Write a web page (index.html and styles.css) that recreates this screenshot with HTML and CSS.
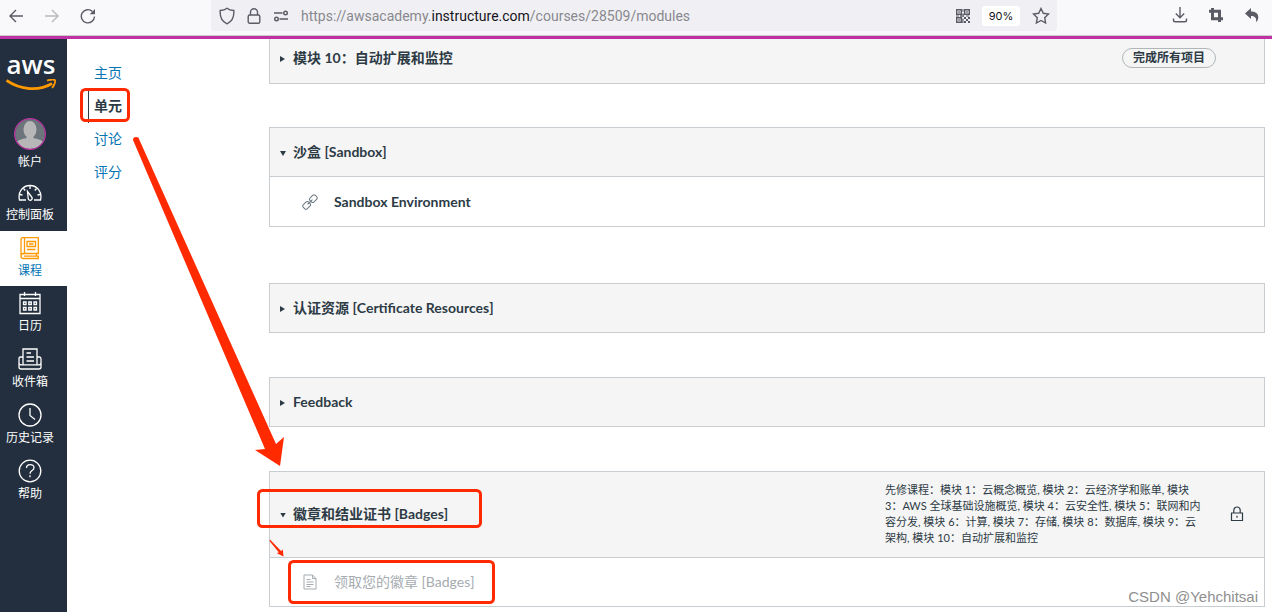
FILE: index.html
```html
<!DOCTYPE html>
<html lang="zh-CN">
<head>
<meta charset="utf-8">
<title>单元</title>
<link rel="stylesheet" href="styles.css">
</head>
<body>
<header class="toolbar">
  <div class="nav-buttons">
    <button class="tool" aria-label="后退"><svg width="16" height="16" viewBox="0 0 16 16"><path d="M15 8H2M8 2L2 8l6 6"/></svg></button>
    <button class="tool faded" aria-label="前进"><svg width="16" height="16" viewBox="0 0 16 16"><path d="M1 8h13M8 2l6 6-6 6"/></svg></button>
    <button class="tool" aria-label="刷新"><svg width="16" height="16" viewBox="0 0 16 16"><path d="M14.500 8.500A6.600 6.600 0 1 1 12.500 3.500"/><path class="solid" d="M15 1v5.300H9.700z"/></svg></button>
  </div>
  <div class="address">
    <svg width="16" height="18" viewBox="0 0 16 18"><path d="M8 1.200C10 2.800 12.500 3.300 14.800 3.500C15.200 9 13 14.500 8 16.800C3 14.500 .8 9 1.200 3.500C3.500 3.300 6 2.800 8 1.200z"/></svg>
    <svg width="14" height="16" viewBox="0 0 14 16"><rect x="1.200" y="7" width="11.600" height="8.200" rx="1.500"/><path d="M3.500 7V4a3.500 3.300 0 0 1 7 0v3"/></svg>
    <svg width="16" height="12" viewBox="0 0 16 12"><path d="M1 3h8.500M6.500 9H15"/><circle cx="12.500" cy="3" r="1.800"/><circle cx="3.500" cy="9" r="1.800"/></svg>
    <span class="url">https://awsacademy.<b>instructure.com</b>/courses/28509/modules</span>
    <svg class="qr" width="14" height="14" viewBox="0 0 14 14"><path d="M.7.700h4.600v4.600H.7zM8.700.700h4.600v4.600H8.700zM.7 8.700h4.600v4.600H.7z"/><path class="solid" d="M2.300 2.300h1.500v1.500H2.300zM10.300 2.300h1.500v1.500h-1.500zM2.300 10.300h1.500v1.500H2.300zM6.500 0h1v3h-1zM6.300 4.500h1.500V8H6.300zM0 6.500h3v1H0zM4 6.300h2v1.500H4zM8 8h2v2H8zM12 8h2v2h-2zM10 10h2v2h-2zM8 12h2v2H8zM12 12h2v2h-2zM6.300 9.500h1.200V14H6.300zM10 6.500h3v1h-3z"/></svg>
    <button class="zoom">90%</button>
    <svg width="18" height="18" viewBox="0 0 18 18"><path d="M9 1.500l2.300 4.800 5.200.700-3.800 3.700.9 5.300L9 13.500 4.400 16l.9-5.300L1.500 7l5.200-.7z"/></svg>
  </div>
  <div class="actions">
    <button class="tool" aria-label="下载"><svg width="16" height="16" viewBox="0 0 16 16"><path d="M8 0v10.500M3.800 6.500L8 10.700l4.200-4.200M1.500 11.500v1.500q0 1.800 1.800 1.800h9.400q1.800 0 1.800-1.800v-1.500"/></svg></button>
    <button class="tool" aria-label="截图"><svg width="16" height="16" viewBox="0 0 16 16"><path class="thick" d="M1 4.300h10.500v7.500M15 11.700H4.500V1M11.500 11v4"/></svg></button>
    <button class="tool" aria-label="撤销"><svg width="16" height="16" viewBox="0 0 16 16"><path class="solid" d="M1 6.500L7 1v3.500c5 0 7.500 2.500 7.300 6-.1 2-1 3.500-2.300 4.500.6-3.500-.5-6-5-6V12z"/></svg></button>
  </div>
</header>
<div class="app">
  <nav class="sidebar" aria-label="全局导航">
    <a class="logo" href="#"><span>aws</span><svg width="52" height="14" viewBox="0 0 52 14"><path class="smile" d="M.5 1.500C14 11 33 12.500 46 4.500"/><path class="smile-tip" d="M41 1.600C44 .7 48 .3 49 1.200 49.500 2.500 48.500 6.500 46 8.800"/></svg></a>
    <a class="item account" href="#"><svg width="32" height="32" viewBox="0 0 32 32"><defs><clipPath id="face"><circle cx="16" cy="16" r="15"/></clipPath></defs><circle cx="16" cy="16" r="15" fill="#6c757c" stroke="none"/><g clip-path="url(#face)" fill="#b7b7b7" stroke="none"><ellipse cx="16" cy="11.500" rx="6.500" ry="8.500"/><path d="M12.500 17h7v3c4 1 9 2 10 5v7h-27v-7c1-3 6-4 10-5z"/></g><circle cx="16" cy="16" r="15.400" fill="none" stroke="#bf32a4" stroke-width="1.200"/></svg><span>帐户</span></a>
    <a class="item" href="#"><svg width="24" height="24" viewBox="0 0 24 24"><path d="M8 20H1.500C-.5 11.500 5 5.500 12 5.500S24.500 11.500 22.500 20H16"/><path d="M12 6v3M5.500 8.500l1.700 2M18.500 8.500l-1.700 2M2 14.500l2.500.5M22 14.500l-2.500.5M9.500 11.500l4.200 5.500a2 2 0 1 1-3.500 1.500z"/></svg><span>控制面板</span></a>
    <a class="item active" href="#"><svg width="24" height="24" viewBox="0 0 24 24"><path d="M5 1.700h15.300v15.800H5.500a2.500 2.500 0 0 0 0 5h14.800v-2.300H6M3 20V4q0-2.300 2-2.300M6.500 2v15M18.500 17.500v2.500M9 5.500h8.500v5H9zM11 8h4.500M9 13.500h8.500"/></svg><span>课程</span></a>
    <a class="item" href="#"><svg width="24" height="24" viewBox="0 0 24 24"><path d="M2 3.500h20v19H2zM2 7.500h20M6.500 1v4M17.500 1v4M9 3.500h6"/><path d="M5.500 11h2.500v2.500H5.500zM10.800 11h2.500v2.500h-2.500zM16 11h2.500v2.500H16zM5.500 16.500h2.500V19H5.500zM10.800 16.500h2.500V19h-2.500zM16 16.500h2.500V19H16z"/></svg><span>日历</span></a>
    <a class="item" href="#"><svg width="24" height="24" viewBox="0 0 24 24"><path d="M5 17.500V2h14v15.500M5 10H2.500Q1 10 1 12v8q0 2 2 2h18q2 0 2-2v-8q0-2-1.500-2H19M1 16q0 1.800 2 1.800h18q2 0 2-1.800M8.500 6h4.500M8.500 10h7.500M8.500 14h7.500"/></svg><span>收件箱</span></a>
    <a class="item" href="#"><svg width="24" height="24" viewBox="0 0 24 24"><circle cx="12" cy="12" r="11"/><path d="M12 5v7.500l5 4"/></svg><span>历史记录</span></a>
    <a class="item" href="#"><svg width="24" height="24" viewBox="0 0 24 24"><circle cx="12" cy="12" r="10.800"/><path d="M8.500 9c0-4.500 7.500-4.500 7.500-.3 0 3-4 2.700-4 6M12 16.300v2"/></svg><span>帮助</span></a>
  </nav>
  <nav class="course-nav" aria-label="课程导航">
    <a href="#">主页</a>
    <a class="current" href="#">单元</a>
    <a href="#">讨论</a>
    <a href="#">评分</a>
  </nav>
  <main class="modules">
    <section class="module first">
      <div class="module-head"><button class="toggle" aria-expanded="false">模块 10：自动扩展和监控</button><span class="pill">完成所有项目</span></div>
    </section>
    <section class="module open">
      <div class="module-head"><button class="toggle" aria-expanded="true">沙盒 [Sandbox]</button></div>
      <div class="row"><svg width="16" height="16" viewBox="0 0 16 16"><g transform="rotate(-45 8 8)"><rect x="-.5" y="5.200" width="7.500" height="5.600" rx="2"/><rect x="9" y="5.200" width="7.500" height="5.600" rx="2"/><path d="M4.500 8h7"/></g></svg><a class="row-title" href="#">Sandbox Environment</a></div>
    </section>
    <section class="module">
      <div class="module-head"><button class="toggle" aria-expanded="false">认证资源 [Certificate Resources]</button></div>
    </section>
    <section class="module">
      <div class="module-head"><button class="toggle" aria-expanded="false">Feedback</button></div>
    </section>
    <section class="module badges">
      <div class="module-head"><button class="toggle" aria-expanded="true">徽章和结业证书 [Badges]</button>
        <p class="prereq">先修课程：模块 1：云概念概览, 模块 2：云经济学和账单, 模块 3：AWS 全球基础设施概览, 模块 4：云安全性, 模块 5：联网和内容分发, 模块 6：计算, 模块 7：存储, 模块 8：数据库, 模块 9：云架构, 模块 10：自动扩展和监控</p>
        <svg class="lock" width="14" height="16" viewBox="0 0 14 16"><path d="M1.500 7h11v7.500h-11zM3.800 7V4.500a3.200 3.500 0 0 1 6.400 0V7M7 9.800v2"/></svg></div>
      <div class="row locked"><svg width="16" height="16" viewBox="0 0 16 16"><path d="M2 1h8.500L14 4.500V15H2zM10.500 1v3.500H14M4.500 5.500h4M4.500 8h7M4.500 10.500h7M4.500 12.500h4"/></svg><span class="row-title">领取您的徽章 [Badges]</span></div>
    </section>
  </main>
</div>
<svg class="marks" width="1272" height="612" viewBox="0 0 1272 612" aria-hidden="true">
  <g fill="none" stroke="#ff2a00" stroke-width="3">
    <rect x="81.500" y="89.500" width="47" height="31" rx="4"/>
    <rect x="258.500" y="490.500" width="222" height="36" rx="4"/>
    <rect x="289.500" y="561.500" width="204" height="41" rx="4"/>
  </g>
  <g fill="#ff2a00">
    <path d="M133 140q0-3 3-3t3 2L276 444l8-7-4 29-25-16 10-1z"/>
    <path d="M270 539.500L281 551l1.800-1.500.7 7-6.500-3.200 1.700-1L269.500 541z"/>
  </g>
</svg>
<div class="watermark">CSDN @Yehchitsai</div>
</body>
</html>
```
FILE: styles.css
```css
* { box-sizing: border-box; }
body {
  margin: 0;
  height: 100vh;
  display: flex;
  flex-direction: column;
  overflow: hidden;
  position: relative;
  background: #fff;
  color: #2d3b45;
  font: 14px/20px Lato, "Noto Sans CJK SC", sans-serif;
}
a { color: inherit; text-decoration: none; }
button { border: 0; background: none; padding: 0; font: inherit; color: inherit; }
svg { display: block; flex: none; fill: none; stroke: currentColor; }

.toolbar {
  flex: none;
  height: 39px;
  display: flex;
  align-items: flex-start;
  justify-content: space-between;
  background: #f9f9fb;
  border-bottom: 3px solid #bf32a4;
  box-shadow: inset 0 -1px #ccccd0;
  color: #5b5b66;
}
.toolbar svg { stroke-width: 1.400; }
.toolbar .solid { fill: currentColor; stroke: none; }
.toolbar .thick { stroke-width: 3; }
.nav-buttons { display: flex; gap: 20px; padding: 8px; width: 211px; }
.actions { display: flex; gap: 20px; padding: 7px 12px; width: 215px; justify-content: flex-end; }
.faded { opacity: .4; }
.address {
  flex: 1;
  height: 31px;
  display: flex;
  align-items: center;
  gap: 12px;
  padding: 0 7px 0 8px;
  background: #f0f0f4;
  border-radius: 0 0 4px 4px;
}
.url { flex: 1; color: #88888e; font: 14px/20px Roboto, sans-serif; white-space: nowrap; }
.url b { font-weight: 400; color: #15141a; }
.zoom { width: 38px; height: 20px; border-radius: 3px; background: #fff; color: #15141a; font: 11px/20px Inter, sans-serif; }
.tool { width: 16px; height: 16px; }

.app { flex: 1; min-height: 0; display: flex; }
.sidebar { flex: none; width: 67px; background: #232f3e; color: #fff; }
.logo { display: block; height: 72px; padding: 10px 0 0 6px; }
.logo span { display: block; width: 50px; text-align: center; font: 600 26px/30px "Open Sans", sans-serif; }
.smile { stroke: #f90; stroke-width: 2.800; }
.smile-tip { stroke: #f90; stroke-width: 1.800; }
.item {
  height: 56px;
  padding: 5px 7px 0 0;
  display: flex;
  flex-direction: column;
  align-items: center;
  gap: 1px;
  font-size: 12px;
  white-space: nowrap;
}
.item svg { stroke-width: 1.300; }
.item.account { height: 64px; padding-top: 7px; gap: 2px; }
.item.active { height: 55px; background: #fff; color: #0374b5; }
.item.active svg { color: #f90; }

.course-nav { flex: none; width: 202px; padding: 18px 0 0 21px; display: flex; flex-direction: column; color: #0374b5; }
.course-nav a { height: 33px; padding: 6px 5px; border-left: 1px solid transparent; }
.course-nav .current { color: #2d3b45; border-color: #2d3b45; font-weight: 600; }

.modules { flex: 1; min-width: 0; padding-right: 7px; }
.module { margin-bottom: 44px; border: 1px solid #c7cdd1; }
.module.first { margin-bottom: 43px; border-top: 0; }
.module.open { margin-bottom: 56px; }
.module-head { min-height: 48px; display: flex; align-items: center; padding: 0 20px 0 10px; background: #f5f5f5; }
.first .module-head { min-height: 44px; padding: 0 48px 6px 10px; }
.toggle { flex: 1; display: flex; align-items: center; gap: 8px; font-weight: 700; text-align: left; }
.toggle::before { content: ""; width: 5px; height: 6px; margin-top: 2px; background: #2d3b45; clip-path: polygon(0 0, 100% 50%, 0 100%); }
.toggle[aria-expanded="true"]::before { width: 6px; height: 5px; margin: 3px -1px 0 0; clip-path: polygon(0 0, 100% 0, 50% 100%); }
.pill { height: 20px; padding: 0 10px; border: 1px solid #b0b6ba; border-radius: 10px; font-size: 12px; line-height: 18px; font-weight: 600; }
.row { height: 50px; padding: 0 32px; display: flex; align-items: center; gap: 16px; border-top: 1px solid #c7cdd1; }
.row-title { font-weight: 700; }
.row svg { color: #6b7780; }
.badges .module-head { min-height: 85px; padding-bottom: 2px; }
.prereq { flex: none; width: 318px; margin: 0 27px 0 0; font-size: 11px; line-height: 16px; }
.lock { stroke-width: 1.200; }
.row.locked { height: 49px; color: #a5abb0; }
.locked .row-title { font-weight: 400; }
.locked svg { color: #a5abb0; }

.marks { position: absolute; top: 0; left: 0; stroke: none; pointer-events: none; }
.watermark { position: absolute; right: 14px; bottom: 5px; color: #8f8f8f; font: 15px/20px "Liberation Sans", sans-serif; }
```
